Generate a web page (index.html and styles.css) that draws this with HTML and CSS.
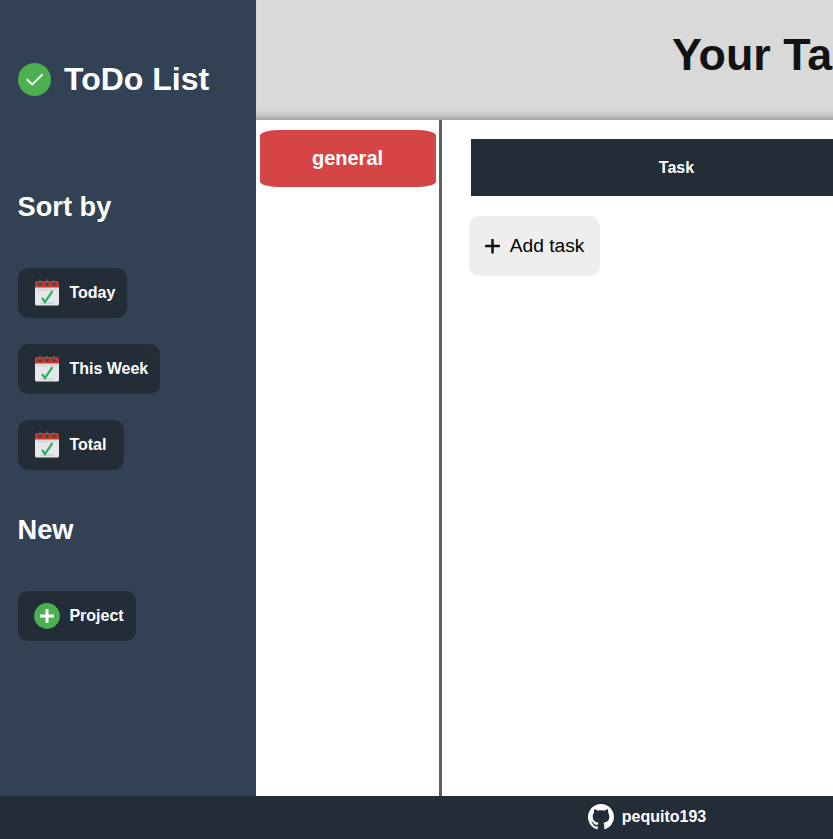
FILE: index.html
```html
<!DOCTYPE html>
<html lang="en">
<head>
<meta charset="utf-8">
<title>ToDo List</title>
<link rel="stylesheet" href="styles.css">
</head>
<body>
<svg class="symbols" width="0" height="0">
  <symbol id="calendar" viewBox="0 0 24 27">
    <path fill="#e6e7e8" d="M0 8h24v17q0 1.500-1.500 1.500h-21Q0 26.500 0 25z"/>
    <path fill="#c0392b" d="M0 8.500V3.500Q0 2 1.500 2h21Q24 2 24 3.500v5z"/>
    <path stroke="#c6c8ca" stroke-dasharray="1 .5" d="M1.500 10h21M1.500 11h21"/>
    <g fill="#343c44"><circle cx="5" cy="5" r="1.700"/><circle cx="12" cy="5" r="1.700"/><circle cx="19" cy="5" r="1.700"/></g>
    <path stroke="#70757a" stroke-width="1" stroke-linecap="round" d="M5 .8v3.500M12 .8v3.500M19 .8v3.500"/>
    <path stroke="#bfc1c3" stroke-width=".9" d="M5.500 24h13"/>
    <path fill="none" stroke="#27ae60" stroke-width="2.200" d="M7 19l3 4L17.500 12"/>
  </symbol>
</svg>
<div class="page">
  <aside class="sidebar">
    <div class="brand">
      <svg width="33" height="33" viewBox="0 0 33 33"><circle cx="16.500" cy="16.500" r="16.500" fill="#4caf50"/><path d="M8.700 16.300l5.600 5.100L24.600 11.300" fill="none" stroke="#fff" stroke-width="1.900"/></svg>
      <h1>ToDo List</h1>
    </div>
    <h2>Sort by</h2>
    <div class="buttons">
      <button class="side-button"><svg class="calendar"><use href="#calendar"/></svg>Today</button>
      <button class="side-button"><svg class="calendar"><use href="#calendar"/></svg>This Week</button>
      <button class="side-button total"><svg class="calendar"><use href="#calendar"/></svg>Total</button>
    </div>
    <h2 class="new">New</h2>
    <div class="buttons">
      <button class="side-button project"><svg class="plus" viewBox="0 0 26 26"><circle cx="13" cy="13" r="12.900" fill="#4caf50"/><path d="M13 6v14M6 13h14" stroke="#fff" stroke-width="3"/></svg>Project</button>
    </div>
  </aside>
  <main class="main">
    <header class="header"><h1>Your Tasks</h1></header>
    <div class="content">
      <nav class="projects"><button class="tab">general</button></nav>
      <section class="tasks">
        <div class="table-head">Task</div>
        <button class="add"><svg width="15" height="15" viewBox="0 0 15 15"><path d="M7.500 .7v12.800M1.100 7h12.800" stroke="#111" stroke-width="2.500" stroke-linecap="round"/></svg>Add task</button>
      </section>
    </div>
  </main>
  <footer class="footer">
    <svg width="26" height="26" viewBox="0 0 16 16"><path fill="#fff" d="M8 0C3.580 0 0 3.580 0 8c0 3.540 2.290 6.530 5.470 7.590.4.070.55-.17.55-.38 0-.19-.01-.82-.01-1.490-2.010.37-2.530-.49-2.690-.94-.09-.23-.48-.94-.82-1.130-.28-.15-.68-.52-.01-.53.63-.01 1.080.58 1.230.82.72 1.210 1.870.87 2.330.66.070-.52.28-.87.510-1.070-1.780-.2-3.640-.89-3.640-3.950 0-.87.310-1.590.82-2.150-.08-.2-.36-1.020.08-2.120 0 0 .67-.21 2.200.82.64-.18 1.320-.27 2-.27s1.360.09 2 .27c1.530-1.040 2.200-.82 2.200-.82.44 1.100.16 1.920.08 2.120.51.56.82 1.270.82 2.150 0 3.070-1.870 3.750-3.650 3.950.29.25.54.73.54 1.480 0 1.070-.01 1.930-.01 2.200 0 .21.15.46.55.38A8.010 8.010 0 0 0 16 8c0-4.420-3.580-8-8-8z"/></svg>
    <span>pequito193</span>
  </footer>
</div>
</body>
</html>
```
FILE: styles.css
```css
* { box-sizing: border-box; }
html { overflow: hidden; }
body { margin: 0; overflow: hidden; font-family: "Liberation Sans", Arial, sans-serif; }
h1, h2 { margin: 0; }
button { border: 0; margin: 0; font-family: inherit; }
svg { flex: none; display: block; }
.symbols { display: none; }

.page {
  width: 1295px;
  height: 839px;
  display: grid;
  grid-template-columns: 256px 1fr;
  grid-template-rows: 796px 43px;
}

.sidebar { background: #334155; color: #fff; padding: 61px 0 0 17.6px; }
.brand { display: flex; align-items: center; gap: 13.4px; height: 37px; }
.brand h1 { font-size: 32px; line-height: 37px; }
.sidebar h2 { font-size: 27.2px; line-height: 31px; margin-top: 93px; }
.sidebar h2.new { margin-top: 44px; }
.buttons { display: flex; flex-direction: column; align-items: flex-start; gap: 26px; margin-top: 46px; }
.side-button {
  display: flex;
  align-items: center;
  height: 50px;
  padding: 0 11.6px 0 16px;
  border-radius: 10px;
  background: #222d38;
  color: #fff;
  font-size: 16px;
  font-weight: bold;
}
.side-button.total { padding-right: 17.6px; }
.side-button.project { padding-right: 12px; }
.calendar { width: 24px; height: 27px; margin: 0 10.8px 1px 1px; }
.plus { width: 26px; height: 26px; margin-right: 9.8px; }

.main { display: flex; flex-direction: column; min-width: 0; }
.header {
  height: 120px;
  padding: 29px 0 0 28px;
  background: #d9d9d9;
  box-shadow: inset 0 -11px 8px -8px #999;
  color: #121212;
  text-align: center;
}
.header h1 { font-size: 44.8px; line-height: 51px; }
.content { flex: 1; display: flex; background: #fff; }
.projects { width: 186px; padding: 10px 3px 0 4px; border-right: 3px solid #5f5f5f; }
.tab {
  display: block;
  width: 176px;
  height: 57px;
  padding: 0 7px 0 6px;
  border-radius: 10%;
  background: #d54545;
  color: #fff;
  font-size: 20px;
  font-weight: bold;
}
.tasks { flex: 1; padding: 19px 0 0 27px; }
.table-head {
  width: 411px;
  height: 57px;
  margin-left: 2px;
  background: #222d38;
  color: #fff;
  font-weight: bold;
  line-height: 57px;
  text-align: center;
}
.add {
  display: flex;
  align-items: center;
  gap: 9.7px;
  width: 131px;
  height: 60px;
  margin-top: 20px;
  padding: 0 0 0 16px;
  border-radius: 10px;
  background: #eee;
  color: #000;
  font-size: 19.2px;
}

.footer {
  grid-column: 1 / -1;
  display: flex;
  align-items: center;
  justify-content: center;
  gap: 8px;
  padding: 0 1px 1px 0;
  background: #222d38;
  color: #fff;
  font-weight: bold;
}
```
